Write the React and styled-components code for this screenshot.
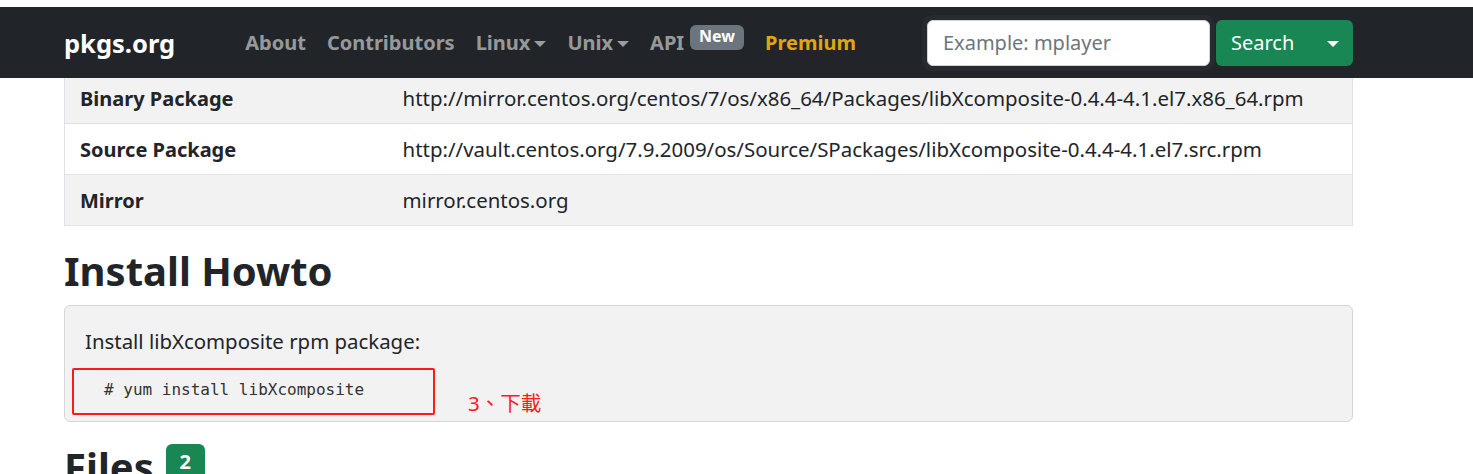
import React from "react";
import styled, { createGlobalStyle } from "styled-components";

const GlobalStyle = createGlobalStyle`
  html, body { margin: 0; padding: 0; background: #fff; }
  body {
    font-family: "Noto Sans", "Open Sans", sans-serif;
    color: #212529;
    font-size: 20px;
    overflow: hidden;
  }
  * { box-sizing: border-box; }
`;

const Page = styled.div`
  padding-top: 7px;
  height: 474px;
  overflow: hidden;
`;

const Navbar = styled.nav`
  position: relative;
  z-index: 2;
  background: #212529;
  height: 71px;
`;

const NavInner = styled.div`
  margin-left: 64px;
  width: 1289px;
  height: 100%;
  display: flex;
  align-items: center;
`;

const Brand = styled.a`
  color: #fff;
  font-weight: 700;
  font-size: 25.5px;
  text-decoration: none;
  margin-right: 70px;
`;

const NavList = styled.ul`
  list-style: none;
  margin: 0;
  padding: 0;
  display: flex;
  align-items: center;
  gap: 21px;
`;

const NavItem = styled.li`
  display: flex;
  align-items: center;
  font-size: 20px;
  font-weight: 700;
  color: ${(p) => (p.$premium ? "#e0a50f" : "rgba(255,255,255,0.55)")};
`;

const Caret = styled.span`
  display: inline-block;
  width: 0;
  height: 0;
  margin-left: 4px;
  border-top: 6px solid currentColor;
  border-left: 6px solid transparent;
  border-right: 6px solid transparent;
  transform: translateY(1px);
`;

const NewBadge = styled.span`
  display: inline-flex;
  justify-content: center;
  height: 25px;
  background: #6c757d;
  color: #fff;
  font-size: 16px;
  font-weight: 700;
  border-radius: 6px;
  padding: 0 9px;
  margin-left: 6px;
  transform: translateY(-5px);
  line-height: 22px;
`;

const SearchForm = styled.form`
  margin-left: auto;
  display: flex;
  align-items: center;
  gap: 6px;
`;

const SearchInput = styled.input`
  width: 283px;
  height: 46px;
  border: 1px solid #ced4da;
  border-radius: 6px;
  background: #fff;
  padding: 0 15px;
  font-family: "Noto Sans", sans-serif;
  font-size: 20px;
  color: #212529;
  box-shadow: 0 0 0 5px rgba(255, 255, 255, 0.03);
  &::placeholder { color: #6c757d; }
  outline: none;
`;

const SearchButton = styled.button`
  width: 137px;
  height: 46px;
  background: #198754;
  border: none;
  border-radius: 6px;
  color: #fff;
  font-family: "Noto Sans", sans-serif;
  font-size: 20px;
  display: flex;
  align-items: center;
  justify-content: space-between;
  padding: 0 14px 0 15px;
`;

const Content = styled.main`
  margin-left: 64px;
  width: 1289px;
`;

const InfoTable = styled.table`
  width: 100%;
  border-collapse: collapse;
  margin-top: -6px;
  border: 1px solid #dee2e6;
`;

const Row = styled.tr`
  background: ${(p) => (p.$striped ? "#f2f2f2" : "#fff")};
  border-bottom: 1px solid #dee2e6;
`;

const HeadCell = styled.th`
  text-align: left;
  font-weight: 700;
  width: 323px;
  height: 51px;
  padding: 0 15px;
  font-size: 20px;
`;

const Cell = styled.td`
  height: 51px;
  padding: 0 15px;
  font-size: 20.45px;
`;

const Heading = styled.h2`
  margin: 21px 0 0;
  font-size: 40px;
  font-weight: 700;
  line-height: 48px;
  height: 58px;
  display: flex;
  align-items: flex-start;
  gap: 12px;
`;

const Card = styled.div`
  background: #f2f2f2;
  border: 1px solid #d6d6d6;
  border-radius: 6px;
  padding: 20px 20px 0;
  height: 117px;
`;

const CardText = styled.p`
  margin: 0;
  font-size: 20.4px;
  line-height: 30px;
`;

const CodeRow = styled.div`
  display: flex;
  align-items: flex-start;
  margin-top: 12px;
  margin-left: -13px;
`;

const Annotated = styled.div`
  width: 363px;
  height: 47px;
  border: 2px solid #ff1a1a;
  border-radius: 2px;
  padding: 10px 0 0 30px;
`;

const Code = styled.pre`
  margin: 0;
  font-family: "DejaVu Sans Mono", "Liberation Mono", monospace;
  font-size: 16px;
  color: #333;
  line-height: 20px;
`;

const Note = styled.span`
  color: #ff1a1a;
  font-size: 20.5px;
  line-height: 28px;
  font-family: "Noto Sans", "Noto Sans CJK TC", sans-serif;
  margin-left: 33px;
  margin-top: 21px;
`;

const CountBadge = styled.span`
  display: inline-flex;
  align-items: center;
  justify-content: center;
  background: #198754;
  color: #fff;
  font-size: 20px;
  font-weight: 700;
  border-radius: 6px;
  width: 39px;
  height: 36px;
  margin-top: 1px;
`;

const rows = [
  ["Binary Package", "http://mirror.centos.org/centos/7/os/x86_64/Packages/libXcomposite-0.4.4-4.1.el7.x86_64.rpm"],
  ["Source Package", "http://vault.centos.org/7.9.2009/os/Source/SPackages/libXcomposite-0.4.4-4.1.el7.src.rpm"],
  ["Mirror", "mirror.centos.org"],
];

export default function App() {
  return (
    <Page>
      <GlobalStyle />
      <Navbar>
        <NavInner>
          <Brand href="#">pkgs.org</Brand>
          <NavList>
            <NavItem>About</NavItem>
            <NavItem>Contributors</NavItem>
            <NavItem>Linux<Caret /></NavItem>
            <NavItem>Unix<Caret /></NavItem>
            <NavItem>API<NewBadge>New</NewBadge></NavItem>
            <NavItem $premium>Premium</NavItem>
          </NavList>
          <SearchForm onSubmit={(e) => e.preventDefault()}>
            <SearchInput placeholder="Example: mplayer" />
            <SearchButton type="button">
              <span>Search</span>
              <Caret />
            </SearchButton>
          </SearchForm>
        </NavInner>
      </Navbar>
      <Content>
        <InfoTable>
          <tbody>
            {rows.map(([k, v], i) => (
              <Row key={k} $striped={i % 2 === 0}>
                <HeadCell>{k}</HeadCell>
                <Cell>{v}</Cell>
              </Row>
            ))}
          </tbody>
        </InfoTable>
        <Heading>Install Howto</Heading>
        <Card>
          <CardText>Install libXcomposite rpm package:</CardText>
          <CodeRow>
            <Annotated>
              <Code># yum install libXcomposite</Code>
            </Annotated>
            <Note>3、下載</Note>
          </CodeRow>
        </Card>
        <Heading>
          Files<CountBadge>2</CountBadge>
        </Heading>
      </Content>
    </Page>
  );
}
